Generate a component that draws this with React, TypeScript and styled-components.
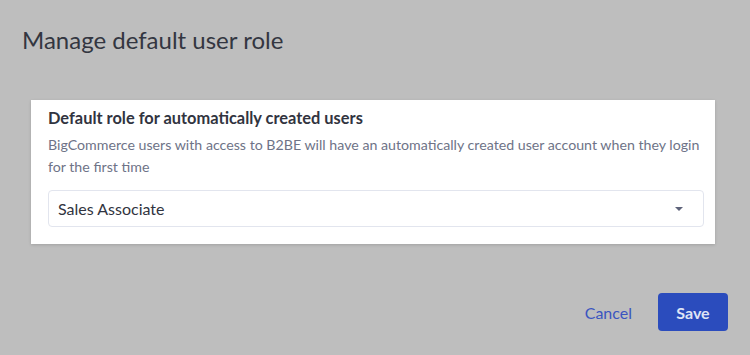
import styled, { createGlobalStyle } from 'styled-components';

const GlobalStyle = createGlobalStyle`
  html, body {
    margin: 0;
    padding: 0;
    background: #bebebe;
  }
  body {
    font-family: Lato, "Noto Sans", sans-serif;
  }
`;

export default function App() {
  return (
    <>
      <GlobalStyle />
      <Modal>
        <Title>Manage default user role</Title>
        <Card>
          <Heading>Default role for automatically created users</Heading>
          <Description>
            BigCommerce users with access to B2BE will have an automatically created user account when they login
            for the first time
          </Description>
          <Select>
            <span>Sales Associate</span>
            <Caret />
          </Select>
        </Card>
        <Footer>
          <TextButton>Cancel</TextButton>
          <PrimaryButton>Save</PrimaryButton>
        </Footer>
      </Modal>
    </>
  );
}

const Modal = styled.div`
  width: 750px;
  height: 355px;
  box-sizing: border-box;
  padding: 24px 22px 0 31px;
  display: flex;
  flex-direction: column;
`;

const Title = styled.h1`
  margin: 0 0 0 -9px;
  font-size: 24px;
  font-weight: 400;
  line-height: 32px;
  color: #333641;
`;

const Card = styled.div`
  margin-top: 44px;
  width: 684px;
  box-sizing: border-box;
  background: #fff;
  padding: 6px 11px 17px 17px;
  box-shadow: 0 1px 3px rgba(0, 0, 0, 0.15);
`;

const Heading = styled.h2`
  margin: 0;
  font-size: 16.4px;
  font-weight: 700;
  line-height: 24px;
  color: #313440;
`;

const Description = styled.p`
  margin: 4px 0 0;
  font-size: 14.2px;
  line-height: 22px;
  color: #6e7387;
`;

const Select = styled.div`
  margin-top: 12px;
  height: 37px;
  box-sizing: border-box;
  border: 1px solid #e2e5ee;
  border-radius: 4px;
  padding: 0 20px 0 9px;
  display: flex;
  align-items: center;
  justify-content: space-between;
  font-size: 16px;
  color: #313440;
`;

const Caret = styled.span`
  width: 0;
  height: 0;
  border-left: 4px solid transparent;
  border-right: 4px solid transparent;
  border-top: 4px solid #5e637a;
`;

const Footer = styled.div`
  margin-top: 49px;
  display: flex;
  justify-content: flex-end;
  align-items: center;
  gap: 26px;
`;

const TextButton = styled.button`
  border: none;
  background: none;
  padding: 0;
  font-family: inherit;
  font-size: 16px;
  color: #3a55c0;
  cursor: pointer;
`;

const PrimaryButton = styled.button`
  width: 70px;
  height: 38px;
  border: none;
  border-radius: 4px;
  background: #2b4cbd;
  color: #dfe4f5;
  font-family: inherit;
  font-size: 16px;
  font-weight: 700;
  cursor: pointer;
`;
